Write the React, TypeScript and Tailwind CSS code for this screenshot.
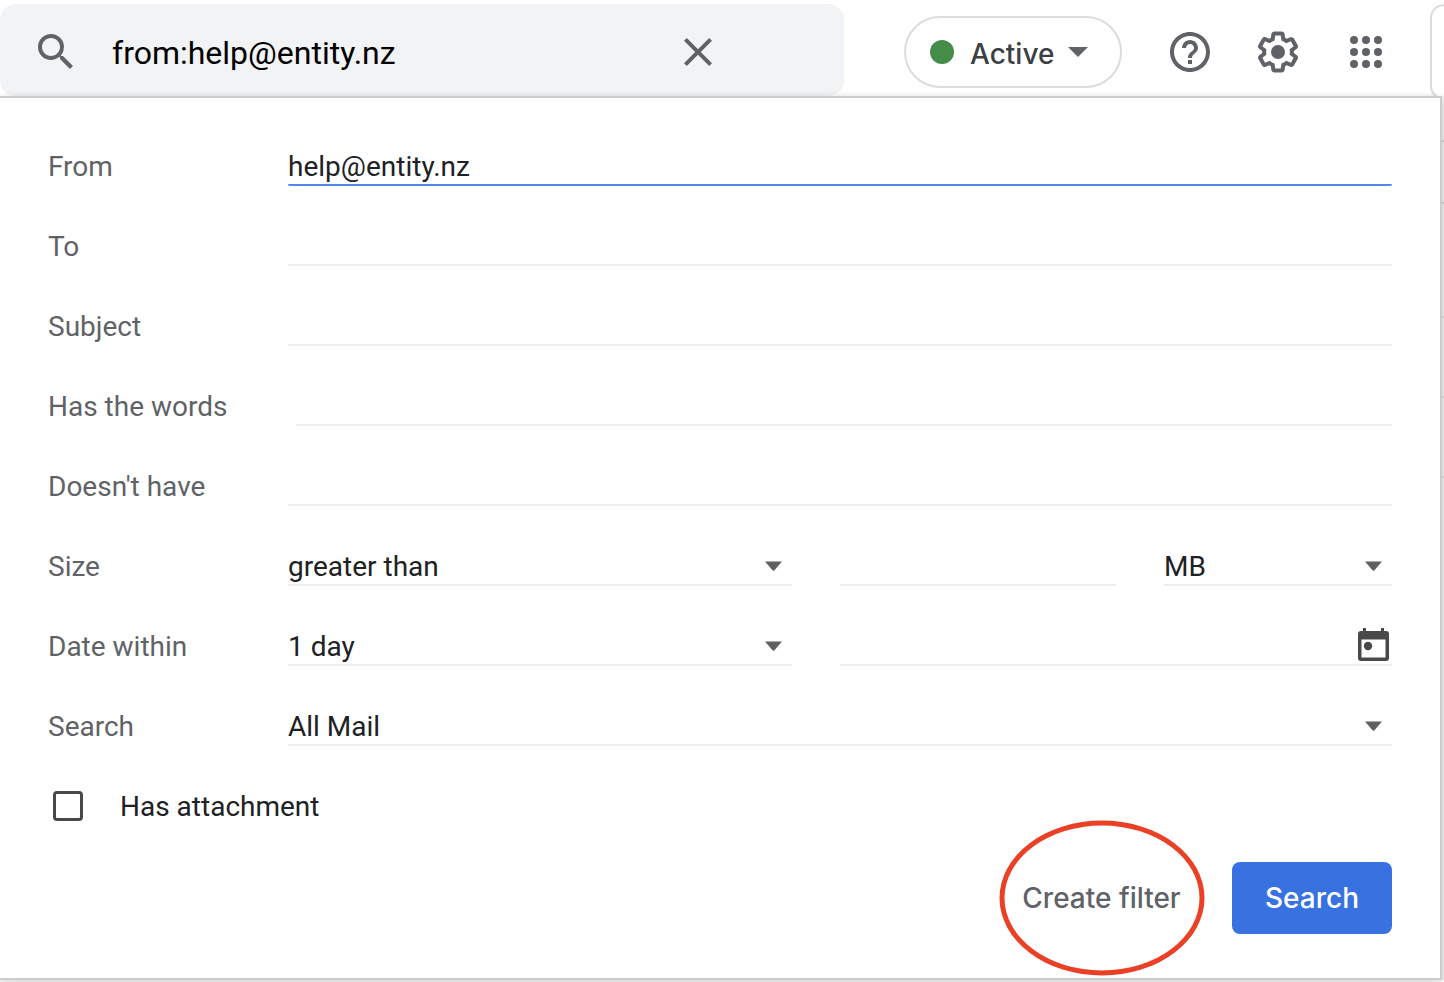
import React from "react";
import { MdClose, MdHelpOutline, MdSearch } from "react-icons/md";

const fieldClass =
  "block h-10 w-full min-w-0 border-b-2 border-[#eeeeee] bg-transparent text-[28px] text-[#202124] outline-none";

function SettingsIcon() {
  return (
    <svg className="size-12" viewBox="0 0 24 24" fill="currentColor" aria-hidden="true">
      <path d="M13.85 22.25h-3.7c-.74 0-1.36-.54-1.45-1.27l-.27-1.89c-.27-.14-.53-.29-.79-.46l-1.8.72c-.7.26-1.47-.03-1.81-.65L2.2 15.53c-.35-.66-.2-1.44.36-1.88l1.53-1.19c-.01-.15-.02-.3-.02-.46 0-.15.01-.31.02-.46l-1.52-1.19c-.59-.45-.74-1.26-.37-1.88l1.85-3.19c.34-.62 1.11-.9 1.79-.63l1.81.73c.26-.17.52-.32.78-.46l.27-1.91c.09-.7.71-1.25 1.44-1.25h3.7c.74 0 1.36.54 1.45 1.27l.27 1.89c.27.14.53.29.79.46l1.8-.72c.71-.26 1.48.03 1.82.65l1.84 3.18c.36.66.2 1.44-.36 1.88l-1.52 1.19c.01.15.02.3.02.46s-.01.31-.02.46l1.52 1.19c.56.45.72 1.23.37 1.86l-1.86 3.22c-.34.62-1.11.9-1.8.63l-1.8-.72c-.26.17-.52.32-.78.46l-.27 1.91c-.1.68-.72 1.22-1.46 1.22zm-3.23-2h2.76l.37-2.55.53-.22c.44-.18.88-.44 1.34-.78l.45-.34 2.38.96 1.38-2.4-2.03-1.58.07-.56c.03-.26.06-.51.06-.78s-.03-.53-.06-.78l-.07-.56 2.03-1.58-1.39-2.4-2.39.96-.45-.35c-.42-.32-.87-.58-1.33-.77l-.52-.22-.37-2.55h-2.76l-.37 2.55-.53.21c-.44.19-.88.44-1.34.79l-.45.33-2.38-.95-1.39 2.39 2.03 1.58-.07.56a7 7 0 0 0-.06.79c0 .26.02.53.06.78l.07.56-2.03 1.58 1.38 2.4 2.39-.96.45.35c.43.33.86.58 1.33.77l.53.22.38 2.55z" />
      <circle cx="12" cy="12" r="3.5" />
    </svg>
  );
}

function AppsIcon() {
  return (
    <svg className="size-12" viewBox="0 0 24 24" fill="currentColor" aria-hidden="true">
      {[6, 12, 18].map((y) =>
        [6, 12, 18].map((x) => <circle key={`${x}-${y}`} cx={x} cy={y} r="2" />)
      )}
    </svg>
  );
}

function CalendarIcon() {
  return (
    <svg className="h-[34px] w-[31px]" viewBox="0 0 31 34" aria-hidden="true">
      <path
        fill="#494949"
        fillRule="evenodd"
        d="M5 0h3v3h15V0h3v3h2a3 3 0 0 1 3 3v24a3 3 0 0 1-3 3H3a3 3 0 0 1-3-3V6a3 3 0 0 1 3-3h2zM3.500 11.500v18h24v-18z"
      />
      <circle cx="10" cy="18" r="4.200" fill="#494949" />
    </svg>
  );
}

type SelectProps = {
  id?: string;
  label?: string;
  options: string[];
};

function SelectField({ id, label, options }: SelectProps) {
  return (
    <div className="relative">
      <select id={id} aria-label={label} className={`${fieldClass} appearance-none`}>
        {options.map((option) => (
          <option key={option}>{option}</option>
        ))}
      </select>
      <svg
        className="pointer-events-none absolute right-2.5 top-[15px] h-2.5 w-[17px]"
        viewBox="0 0 17 10"
        fill="#606060"
        aria-hidden="true"
      >
        <path d="M0 .5h17L9.500 9.200q-1 1-2 0z" />
      </svg>
    </div>
  );
}

type RowProps = {
  id: string;
  label: string;
  children: React.ReactNode;
};

function Row({ id, label, children }: RowProps) {
  return (
    <div className="flex h-20 items-end">
      <label htmlFor={id} className="flex h-10 w-60 shrink-0 items-center pt-0.5 text-[#5f6368]">
        {label}
      </label>
      <div className="min-w-0 flex-1">{children}</div>
    </div>
  );
}

function Header() {
  return (
    <header className="flex h-24 items-center text-[#5f6368]">
      <div className="flex h-full min-w-0 flex-1 pt-1">
        <div className="flex min-w-0 flex-1 items-center rounded-2xl bg-[#f1f3f4] pl-8 pr-[122px] pt-1">
          <button type="button" aria-label="Search mail">
            <MdSearch className="size-12" />
          </button>
          <input
            type="text"
            aria-label="Search mail"
            defaultValue="from:help@entity.nz"
            className="ml-8 min-w-0 flex-1 bg-transparent pt-0.5 text-[32px] text-black outline-none"
          />
          <button type="button" aria-label="Clear search">
            <MdClose className="size-12" />
          </button>
        </div>
      </div>
      <button
        type="button"
        className="ml-[60px] mt-4 flex h-[72px] w-[218px] shrink-0 items-center self-start rounded-full border-2 border-[#dadce0] pl-6 text-[#3c4043]"
      >
        <span className="size-6 rounded-full bg-[#458c48]" />
        <span className="ml-4 pt-1 font-[family-name:Inter] text-[28px] font-medium">Active</span>
        <svg className="ml-3.5 h-2.5 w-5" viewBox="0 0 20 10" fill="#5f6368" aria-hidden="true">
          <path d="M0 0h20L10 10z" />
        </svg>
      </button>
      <div className="ml-11 flex shrink-0 gap-10 pt-2">
        <button type="button" aria-label="Support">
          <MdHelpOutline className="size-12" />
        </button>
        <button type="button" aria-label="Settings">
          <SettingsIcon />
        </button>
        <button type="button" aria-label="Google apps">
          <AppsIcon />
        </button>
      </div>
      <div className="ml-10 h-full w-3.5 shrink-0 pt-1">
        <div className="h-24 rounded-l-2xl border-2 border-r-0 border-[#dadce0]" />
      </div>
    </header>
  );
}

function FilterForm() {
  return (
    <form
      className="relative min-w-0 flex-1 border-y-2 border-r-2 border-[#cccccc] bg-white px-12 pb-11 pt-2 text-[28px] shadow-[0_2px_8px_rgba(0,0,0,0.2)]"
      onSubmit={(e) => e.preventDefault()}
    >
      <Row id="from" label="From">
        <input
          id="from"
          type="text"
          defaultValue="help@entity.nz"
          className="block h-10 w-full rounded-xs border-b-2 border-[#4f86ec] bg-transparent pt-1 text-[#202124] outline-none"
        />
      </Row>
      <Row id="to" label="To">
        <input id="to" type="text" className={fieldClass} />
      </Row>
      <Row id="subject" label="Subject">
        <input id="subject" type="text" className={fieldClass} />
      </Row>
      <Row id="has-words" label="Has the words">
        <div className="pl-2">
          <input id="has-words" type="text" className={fieldClass} />
        </div>
      </Row>
      <Row id="excludes" label="Doesn't have">
        <input id="excludes" type="text" className={fieldClass} />
      </Row>
      <Row id="size" label="Size">
        <div className="grid grid-cols-[21fr_23fr] gap-12">
          <SelectField id="size" options={["greater than", "less than"]} />
          <div className="grid grid-cols-[23fr_19fr] gap-12">
            <input type="text" aria-label="Size value" className={fieldClass} />
            <SelectField label="Size unit" options={["MB", "KB", "Bytes"]} />
          </div>
        </div>
      </Row>
      <Row id="within" label="Date within">
        <div className="grid grid-cols-[21fr_23fr] gap-12">
          <SelectField id="within" options={["1 day", "3 days", "1 week", "2 weeks", "1 month"]} />
          <div className="flex h-10 items-center border-b-2 border-[#eeeeee] pr-[3px]">
            <input
              type="text"
              aria-label="Date"
              className="h-full min-w-0 flex-1 bg-transparent text-[#202124] outline-none"
            />
            <button type="button" aria-label="Choose a date">
              <CalendarIcon />
            </button>
          </div>
        </div>
      </Row>
      <Row id="search-in" label="Search">
        <SelectField id="search-in" options={["All Mail", "Inbox", "Starred", "Sent Mail", "Drafts"]} />
      </Row>

      <div className="flex h-20 items-end">
        <div className="flex h-10 items-center pl-[5px]">
          <input
            id="attachment"
            type="checkbox"
            className="size-[30px] appearance-none rounded-sm border-3 border-[#494949] checked:bg-[#494949]"
          />
          <label htmlFor="attachment" className="pl-[37px] pt-0.5 text-[#202124]">
            Has attachment
          </label>
        </div>
      </div>

      <div className="mt-9 flex items-center justify-end gap-12 font-[family-name:Inter] font-medium">
        <button type="button" className="relative h-[72px] w-[165px] whitespace-nowrap text-[#5f6368]">
          Create filter
          <span className="pointer-events-none absolute left-1/2 top-1/2 h-[155px] w-[205px] -translate-x-1/2 -translate-y-1/2 rounded-[50%] border-5 border-[#ea4025]" />
        </button>
        <button type="submit" className="h-[72px] w-40 rounded-lg bg-[#3871e0] text-white">
          Search
        </button>
      </div>
    </form>
  );
}

// Edge of the mail list that shows past the open search panel
function MailEdge() {
  return (
    <div className="w-0.5 shrink-0 bg-[#f5f5f5]">
      <div className="h-[46px] border-b-2 border-[#cccccc]" />
      <div className="h-[62px] border-b-2 border-[#cccccc]" />
      <div className="h-[114px] border-b-2 border-[#dddddd]" />
      <div className="h-20 border-b-2 border-[#dddddd]" />
      <div className="h-20 border-b-2 border-[#dddddd]" />
    </div>
  );
}

function App() {
  return (
    <div className="min-h-screen bg-white font-[Roboto,sans-serif]">
      <Header />
      <div className="flex">
        <FilterForm />
        <MailEdge />
      </div>
    </div>
  );
}

export default App;
